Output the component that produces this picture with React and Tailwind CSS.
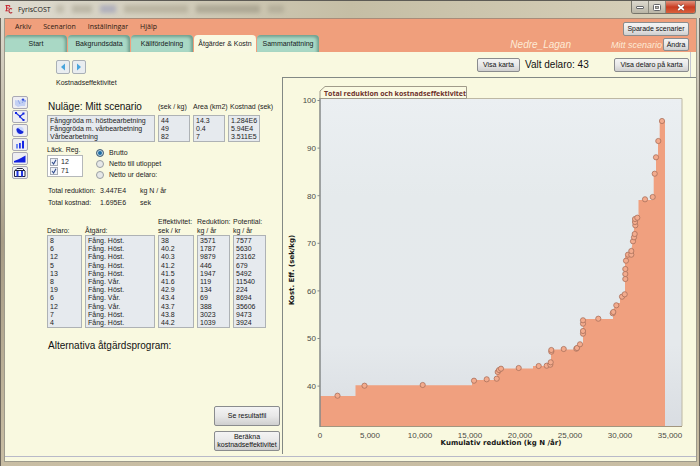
import React from "react";

const UI = "font-['Liberation_Sans',Arial,sans-serif]";
const BTN =
  "rounded-[2px] border border-[#8a8c8e] bg-linear-to-b from-[#f4f4f4] via-[#e8e8e8] to-[#cfcfcf] text-center whitespace-nowrap text-[#111]";

const tabs = ["Start", "Bakgrundsdata", "Källfördelning", "Åtgärder & Kostn", "Sammanfattning"];

const measures = [
  ["Fånggröda m. höstbearbetning", "44", "14.3", "1.284E6"],
  ["Fånggröda m. vårbearbetning", "49", "0.4", "5.94E4"],
  ["Vårbearbetning", "82", "7", "3.511E5"],
];

const actions = [
  ["8", "Fång. Höst.", "38", "3571", "7577"],
  ["6", "Fång. Höst.", "40.2", "1787", "5630"],
  ["12", "Fång. Höst.", "40.3", "9879", "23162"],
  ["5", "Fång. Höst.", "41.2", "446", "679"],
  ["13", "Fång. Höst.", "41.5", "1947", "5492"],
  ["8", "Fång. Vår.", "41.6", "119", "11540"],
  ["19", "Fång. Höst.", "42.9", "134", "224"],
  ["6", "Fång. Vår.", "43.4", "69", "8694"],
  ["12", "Fång. Vår.", "43.7", "388", "35606"],
  ["7", "Fång. Höst.", "43.8", "3023", "9473"],
  ["4", "Fång. Höst.", "44.2", "1039", "3924"],
];

const points = [
  [337.5, 395.7], [364.5, 385.7], [422.7, 385], [474, 380.7], [486.7, 379.3], [496.7, 378.7],
  [497.7, 372], [499, 370], [501, 368.7], [518.7, 368], [538.7, 366], [546.7, 365.7],
  [550.3, 364.7], [550.7, 362.3], [551.3, 351.7], [551.3, 350], [563.7, 349], [576.3, 348.7],
  [577, 348], [580, 344.3], [583, 333.7], [583, 331], [583, 323.7], [583, 320.3],
  [598.3, 318.7], [612.7, 313.3], [613.3, 312], [616.3, 305.3], [622, 296.7], [624.7, 294.3],
  [625.3, 279], [625.3, 274], [625.3, 269], [626, 260.7], [628, 254.7], [631.3, 254.7],
  [631.3, 251], [633, 241.3], [634, 237.3], [634.7, 234], [635.3, 225.3], [635, 222],
  [635, 219], [637.3, 217.7], [645, 199.3], [652.7, 197], [654.7, 173.7], [656, 157.3],
  [658.3, 141], [662, 121],
];

function Logo() {
  return (
    <svg viewBox="0 0 8 9" className="h-[9px] w-2" aria-hidden="true">
      <path d="M.5.6h4.2v1.6M1.6.6v5.2M.4 5.8h2.4M1.6 3.1h2.2" stroke="#c8202c" strokeWidth="1" fill="none" />
      <path d="M7 4.2C5.8 3 3.9 3.600 3.900 5.700S5.900 8.600 7.200 7.400" stroke="#b3232d" strokeWidth="1.100" fill="none" />
    </svg>
  );
}

const toolIcons = [
  <>
    <path d="M2 3l4 1 3-2 4 1-1 6-4 0-3 1-3-2z" fill="#c3d0f3" />
    <path d="M5 3l2 4M9 6l2-3" stroke="#8ea6e6" />
    <circle cx="10" cy="2.600" r="1.200" fill="#2f49dd" />
    <circle cx="12" cy="4" r=".7" fill="#4a64e4" />
  </>,
  <>
    <path d="M3 2l4 3.500L10.500 2.500M7 5.500V6l3.500 3" stroke="#2439d6" strokeWidth="1.200" fill="none" />
    <rect x="2" y="1" width="2" height="2" fill="#1425e6" />
    <rect x="9.500" y="1.500" width="2" height="2" fill="#1425e6" />
    <rect x="6" y="4.500" width="2" height="2" fill="#1425e6" />
    <rect x="9.500" y="8" width="2" height="2" fill="#1425e6" />
  </>,
  <>
    <circle cx="7" cy="5.500" r="3.800" fill="#c9d6fb" />
    <path d="M3.400 4.500C3.600 2.500 6 3 7 4.700l3.600 2C9.800 10 4 10 3.400 4.500z" fill="#1527d8" />
  </>,
  <>
    <rect x="3" y="5" width="2" height="4.500" fill="#6f8bf0" />
    <rect x="6" y="4" width="1.800" height="5.500" fill="#2336e4" />
    <rect x="9" y="1.800" width="2" height="7.700" fill="#1425e6" />
  </>,
  <path d="M1 9.500V8L5 6.500l3-1.500L12.500 2.500v7z" fill="#1220e0" />,
  <>
    <path d="M1.500 9.500V4L4 1.500h5.500L12 4v5.500z" fill="#f5f7ff" stroke="#23263e" />
    <path d="M4.500 3.500v6M9 3.500v6" stroke="#2438e2" strokeWidth="2" />
    <path d="M2 3.500h10" stroke="#23263e" />
  </>,
];
const toolNames = ["Karta", "Nätverk", "Cirkeldiagram", "Stapeldiagram", "Kostnadskurva", "Resultat"];

function CostChart() {
  return (
    <svg viewBox="283 78 413 376" className="block h-auto w-full" role="img" aria-label="Total reduktion och kostnadseffektivitet">
      <defs>
        <linearGradient id="plot" x1="0" y1="0" x2="0" y2="1">
          <stop offset="0" stopColor="#ebeff2" />
          <stop offset=".3" stopColor="#e5eaec" />
          <stop offset=".75" stopColor="#e5e9ec" />
          <stop offset="1" stopColor="#d9dde2" />
        </linearGradient>
      </defs>
      <rect x="320" y="98.500" width="362" height="327.500" fill="url(#plot)" />
      <path
        d="M320 426V396H355.500V385.300H472V380H497V373L501 368.500H533V366H551V349.500H578L580 344H583V319H613V310L617 303H620V296H625V256L631 252L633 240L635 218H638.500V200H653.700V174H656V157H658V141H659.700V121H665V426z"
        fill="#f0a07f"
      />
      <path d="M320 98.500H682V426" fill="none" stroke="#bdb8a4" />
      <path d="M320 426.500H682" stroke="#a2967f" />
      <path d="M320 98V427" stroke="#858989" strokeWidth="1.500" />
      {points.map(([x, y], i) => (
        <circle key={i} cx={x} cy={y} r="2.600" fill="#f3ab8d" stroke="#a9705b" strokeWidth=".8" />
      ))}
      <path d="M320 98.500V91L325 86.500H466.500V98.500z" fill="#fafae2" stroke="#a09b8a" />
      <text x="324" y="95.500" className="fill-[#6d302b] font-['Open_Sans','Noto_Sans',sans-serif] text-[7px] font-bold">
        Total reduktion och kostnadseffektivitet
      </text>
      <g className="fill-[#4a4a46] font-['Liberation_Sans',sans-serif] text-[8px]">
        {[100, 90, 80, 70, 60, 50, 40].map((v, i) => (
          <g key={v}>
            <path d={`M317.500 ${100.500 + i * 47.600}h2.500`} stroke="#858989" />
            <text x="316" y={103.300 + i * 47.600} textAnchor="end">{v}</text>
          </g>
        ))}
        {["0", "5,000", "10,000", "15,000", "20,000", "25,000", "30,000", "35,000"].map((v, i) => (
          <text key={v} x={320 + i * 50} y="437.500" textAnchor="middle">{v}</text>
        ))}
      </g>
      <g className="fill-[#161616] font-['DejaVu_Sans',Verdana,sans-serif] text-[7px] font-bold">
        <text x="501" y="445" textAnchor="middle">Kumulativ reduktion (kg N /år)</text>
        <text transform="translate(294 270) rotate(-90)" textAnchor="middle">Kost. Eff. (sek/kg)</text>
      </g>
    </svg>
  );
}

function cellClass(row, last) {
  return `border-x border-[#aeb2b5] bg-[#e6eaee] p-0 pl-[2px] whitespace-nowrap ${row === 0 ? "border-t pt-px" : ""} ${row === last ? "border-b" : ""}`;
}

function TitleBar() {
  return (
    <div className="relative flex h-[17px] items-center overflow-hidden bg-linear-to-r from-[#dedbd0] via-[#c5bea5] to-[#d8d1bb] pl-[5px]">
      <div className="absolute top-1 left-14 flex gap-2 opacity-50 blur-[2px]" aria-hidden="true">
        <span className="h-2 w-2 bg-[#a9a491]" />
        <span className="h-2 w-5 bg-[#a09b88]" />
        <span className="h-2 w-4 bg-[#8a8eb4]" />
        <span className="h-2 w-16 bg-[#a39d88]" />
        <span className="h-2 w-16 bg-[#8f8a78]" />
        <span className="h-2 w-4 bg-[#a09b88]" />
      </div>
      <Logo />
      <h1 className="relative ml-[5px] font-['Open_Sans','Noto_Sans',sans-serif] text-[7px] leading-[10px] text-[#151515]">FyrisCOST</h1>
      <div className="absolute top-0 right-1 flex h-[13px] overflow-hidden rounded-b-[3px] border border-t-0 border-[#77756b]">
        <button aria-label="Minimera" className="flex w-[17px] items-center justify-center border-r border-[#8d8b80] bg-linear-to-b from-[#dedacf] to-[#b9b5a6]">
          <span className="h-[3px] w-2 rounded-[1px] border border-[#66676a] bg-white" />
        </button>
        <button aria-label="Maximera" className="flex w-[17px] items-center justify-center border-r border-[#8d8b80] bg-linear-to-b from-[#dedacf] to-[#b9b5a6]">
          <svg viewBox="0 0 8 7" className="h-[7px] w-2">
            <rect x=".5" y=".5" width="7" height="6" rx="1" fill="#fff" stroke="#66676a" />
            <rect x="2.500" y="2.500" width="3" height="2" fill="#b9b5a6" stroke="#66676a" strokeWidth=".8" />
          </svg>
        </button>
        <button aria-label="Stäng" className="flex w-[29px] items-center justify-center bg-linear-to-b from-[#e0917c] via-[#c93b20] to-[#d9613d]">
          <svg viewBox="0 0 8 7" className="h-[7px] w-2">
            <path d="M1.200 1l5.600 5M6.800 1L1.200 6" stroke="#6b3a34" strokeWidth="2.800" />
            <path d="M1.200 1l5.600 5M6.800 1L1.200 6" stroke="#fff" strokeWidth="1.700" />
          </svg>
        </button>
      </div>
    </div>
  );
}

function Header() {
  return (
    <header className="flex h-[34px] justify-between border-t border-[#a98b78] bg-[#f09f7c]">
      <div className="flex flex-col justify-between">
        <nav className="flex gap-3 pt-[3px] pl-[10px] font-['Open_Sans','Noto_Sans',sans-serif] text-[7px] leading-[10px] text-[#2b1912]">
          {["Arkiv", "Scenarion", "Inställningar", "Hjälp"].map((m) => (
            <button key={m}>{m}</button>
          ))}
        </nav>
        <div role="tablist" className="flex gap-px">
          {tabs.map((t, i) => (
            <button
              key={t}
              role="tab"
              aria-selected={i === 3}
              className={`h-[17px] w-[62px] rounded-t-[4px] text-center leading-[18px] whitespace-nowrap text-[#16201c] ${
                i === 3 ? "bg-[#f9f9e2]" : "bg-[#a9d8c5] shadow-[inset_-2px_2px_3px_#719f8e]"
              }`}
            >
              {t}
            </button>
          ))}
        </div>
      </div>
      <div className="flex flex-col items-end gap-[2px] pt-[3px] pr-[7px]">
        <button className={`${BTN} h-[14px] w-[66px] leading-3`}>Sparade scenarier</button>
        <div className="flex items-center text-[#fdebd6] italic">
          <span className="mr-10 text-[10px] leading-3">Nedre_Lagan</span>
          <span className="mr-px text-[9px] leading-3">Mitt scenario</span>
          <button className={`${BTN} h-[13px] w-[26px] leading-[11px] not-italic`}>Ändra</button>
        </div>
      </div>
    </header>
  );
}

export default function App() {
  return (
    <div className={`flex min-h-screen flex-col border-t border-[#5d5b55] bg-[#c9c1aa] text-[7px] leading-[8px] text-[#1c1c1c] ${UI}`}>
      <TitleBar />
      <div className="flex grow border-x border-[#6d675e] bg-linear-to-b from-[#ddd9cc] via-[#a79c86] to-[#c9bea4] px-[3px] pr-[2px] pb-1">
        <div className="flex grow flex-col border border-t-0 border-[#9d9a8c] bg-[#f9f9e0]">
          <Header />
          <main className="flex grow border-b border-[#b9bac8] pb-[2px]">
            <section className="flex w-[277px] shrink-0 pb-[3px]">
              <div className="flex w-[42px] flex-col gap-px pt-[44px] pl-[7px]">
                {toolIcons.map((icon, i) => (
                  <button key={i} aria-label={toolNames[i]} className="h-[13px] w-4 rounded-[2px] border border-[#aaa9b4] bg-[#eeeef2]">
                    <svg viewBox="0 0 14 11" className="h-[11px] w-[14px]">{icon}</svg>
                  </button>
                ))}
              </div>
              <div className="flex grow flex-col">
                <div className="flex gap-[2px] pt-2 pl-[9px]">
                  {["Föregående", "Nästa"].map((n, i) => (
                    <button key={n} aria-label={n} className="flex h-[14px] w-[14px] items-center justify-center rounded-[2px] border border-[#a9b0b6] bg-[#e9edf0]">
                      <svg viewBox="0 0 6 8" className={`h-2 w-[6px] ${i ? "rotate-180" : ""}`}>
                        <path d="M5 .5v7L1 4z" fill="#4aa5dc" />
                      </svg>
                    </button>
                  ))}
                </div>
                <p className="mt-[5px] pl-[9px]">Kostnadseffektivitet</p>

                <table className="mt-3 -ml-[3px] w-[219px] table-fixed border-separate border-spacing-x-[3px] border-spacing-y-0 text-left">
                  <colgroup>
                    <col className="w-[108px]" /><col className="w-8" /><col className="w-8" /><col className="w-8" />
                  </colgroup>
                  <thead>
                    <tr className="h-4 whitespace-nowrap">
                      <th className="p-0 pl-px text-[10px] leading-3 font-normal text-[#111]">Nuläge: Mitt scenario</th>
                      <th className="p-0 font-normal">(sek / kg)</th>
                      <th className="p-0 font-normal">Area (km2)</th>
                      <th className="p-0 pl-[2px] font-normal">Kostnad (sek)</th>
                    </tr>
                  </thead>
                  <tbody>
                    {measures.map((r, i) => (
                      <tr key={r[0]}>
                        {r.map((c, j) => <td key={j} className={cellClass(i, 2)}>{c}</td>)}
                      </tr>
                    ))}
                  </tbody>
                </table>

                <div className="mt-1 flex">
                  <fieldset className="w-[49px]">
                    <legend className="pb-px">Läck. Reg.</legend>
                    <div className="flex h-[22px] w-9 flex-col justify-center gap-px border border-[#b5b8ba] bg-white pl-[2px]">
                      {["12", "71"].map((v) => (
                        <label key={v} className="flex items-center gap-[3px]">
                          <span className="relative flex">
                            <input type="checkbox" defaultChecked className="h-2 w-2 appearance-none border border-[#a5abb5] bg-[#eef1f8]" />
                            <svg viewBox="0 0 8 8" className="pointer-events-none absolute inset-0 h-2 w-2">
                              <path d="M2 4l1.600 2L6 1.800" fill="none" stroke="#34508f" strokeWidth="1.200" />
                            </svg>
                          </span>
                          {v}
                        </label>
                      ))}
                    </div>
                  </fieldset>
                  <div role="radiogroup" aria-label="Belastning" className="flex flex-col gap-[3px] pt-[3px]">
                    {["Brutto", "Netto till utloppet", "Netto ur delaro:"].map((v, i) => (
                      <label key={v} className="flex items-center gap-[5px]">
                        <input
                          type="radio"
                          name="load"
                          defaultChecked={i === 0}
                          className="h-2 w-2 appearance-none rounded-full border border-[#9a9fa3] bg-[#e6e8e8] checked:border-[#55697a] checked:bg-[#1f6ea5] checked:shadow-[inset_0_0_0_1px_#c9dde8]"
                        />
                        {v}
                      </label>
                    ))}
                  </div>
                </div>

                <dl className="mt-2 grid grid-cols-[52px_1fr] gap-y-1 pl-px whitespace-nowrap">
                  <dt>Total reduktion:</dt>
                  <dd className="flex"><span className="w-10">3.447E4</span>kg N / år</dd>
                  <dt>Total kostnad:</dt>
                  <dd className="flex"><span className="w-10">1.695E6</span>sek</dd>
                </dl>

                <table className="mt-[9px] -ml-[3px] h-[112px] w-[225px] table-fixed border-separate border-spacing-x-[3px] border-spacing-y-0 text-left">
                  <colgroup>
                    <col className="w-[35px]" /><col className="w-[70px]" /><col className="w-9" /><col className="w-[33px]" /><col className="w-[33px]" />
                  </colgroup>
                  <thead>
                    <tr className="h-[19px] align-bottom leading-[9px] whitespace-nowrap">
                      <th className="p-0 font-normal">Delaro:</th>
                      <th className="p-0 font-normal">Åtgärd:</th>
                      <th className="p-0 font-normal">Effektivitet:<br />sek / kr</th>
                      <th className="p-0 font-normal">Reduktion:<br />kg / år</th>
                      <th className="p-0 font-normal">Potential:<br />kg / år</th>
                    </tr>
                  </thead>
                  <tbody>
                    {actions.map((r, i) => (
                      <tr key={i}>
                        {r.map((c, j) => <td key={j} className={cellClass(i, 10)}>{c}</td>)}
                      </tr>
                    ))}
                  </tbody>
                </table>

                <h2 className="mt-3 pl-px text-[10px] leading-3 text-[#111]">Alternativa åtgärdsprogram:</h2>

                <div className="mt-auto mr-[2px] flex w-[66px] flex-col gap-[5px] self-end">
                  <button className={`${BTN} h-5`}>Se resultatfil</button>
                  <button className={`${BTN} h-5`}>Beräkna<br />kostnadseffektivitet</button>
                </div>
              </div>
            </section>

            <section className="flex grow flex-col">
              <div className="mr-[5px] flex h-[25px] items-center justify-between border-r border-[#c3c5d2] pr-px pl-[195px]">
                <div className="flex items-center gap-[5px]">
                  <button className={`${BTN} h-[14px] w-[43px]`}>Visa karta</button>
                  <span className="text-[10px] leading-3 text-[#111]">Valt delaro: 43</span>
                </div>
                <button className={`${BTN} h-[14px] w-[75px]`}>Visa delaro på karta</button>
              </div>
              <div className="grow border-t border-l border-[#838985]">
                <CostChart />
              </div>
            </section>
          </main>
          <div className="h-1" />
        </div>
      </div>
    </div>
  );
}
